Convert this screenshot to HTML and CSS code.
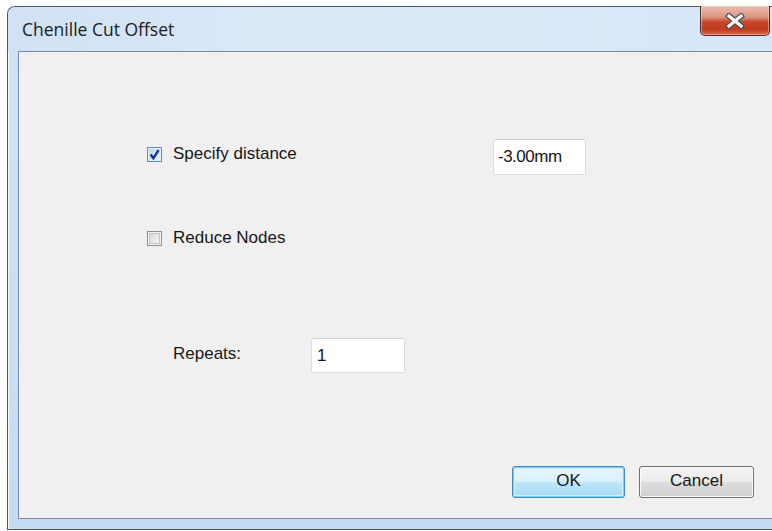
FILE: index.html
```html
<!DOCTYPE html>
<html lang="en">
<head>
<meta charset="utf-8">
<title>Chenille Cut Offset</title>
<link rel="stylesheet" href="styles.css">
</head>
<body>
<div class="window">
  <div class="titlebar">
    <span class="title">Chenille Cut Offset</span>
    <button class="close" aria-label="Close">
      <svg width="22" height="16" viewBox="0 0 22 16">
        <path d="M5 3 L17 13 M17 3 L5 13" stroke="#4a4a4a" stroke-width="5.6" stroke-linecap="square"/>
        <path d="M5 3 L17 13 M17 3 L5 13" stroke="#ffffff" stroke-width="3.2" stroke-linecap="square"/>
      </svg>
    </button>
  </div>
  <div class="client">
    <div class="row row-distance">
      <label class="check-label">
        <span class="checkbox checked">
          <svg width="11" height="11" viewBox="0 0 11 11"><path d="M1.6 5.6 L4.4 9.2 L9.6 1.2" fill="none" stroke="#1f2f86" stroke-width="2.4"/></svg>
        </span>
        <span>Specify distance</span>
      </label>
      <div class="field field-distance">-3.00mm</div>
    </div>
    <div class="row row-nodes">
      <label class="check-label">
        <span class="checkbox"></span>
        <span>Reduce Nodes</span>
      </label>
    </div>
    <div class="row row-repeats">
      <span class="repeats-label">Repeats:</span>
      <div class="field field-repeats">1</div>
    </div>
    <div class="row row-buttons">
      <button class="btn btn-default">OK</button>
      <button class="btn">Cancel</button>
    </div>
  </div>
</div>
</body>
</html>
```
FILE: styles.css
```css
html, body {
  margin: 0;
  padding: 0;
  background: #ffffff;
  overflow: hidden;
  height: 531px;
}

.window {
  margin: 6px 0 0 7px;
  height: 522px;
  border: 1px solid #4d5966;
  border-right: none;
  border-radius: 8px 0 0 0;
  background: linear-gradient(180deg, #dbe8f6 0%, #cfe2f5 8%, #c6dcf2 100%);
  display: flex;
  flex-direction: column;
  box-shadow: inset 1px 1px 0 #f4f9fe;
}

.titlebar {
  height: 44px;
  flex: none;
  display: flex;
  align-items: flex-start;
  justify-content: space-between;
  background: linear-gradient(90deg, #cfe1f4 0%, #dceaf8 40%, #d5e6f6 100%);
  border-radius: 7px 0 0 0;
}

.title {
  font-family: "Open Sans", "Noto Sans", sans-serif;
  font-size: 17.5px;
  color: #1b1b1b;
  margin: 10px 0 0 14px;
}

.close {
  width: 70px;
  height: 30px;
  margin: -1px 2px 0 0;
  padding: 0;
  border: 1px solid #5c2a24;
  border-top: none;
  border-radius: 0 0 5px 5px;
  background: linear-gradient(180deg, #e9bcae 0%, #dc9682 38%, #c8452c 55%, #c23a22 80%, #d6664c 100%);
  box-shadow: inset 0 0 0 1px rgba(255, 220, 210, 0.45);
  display: flex;
  align-items: center;
  justify-content: center;
}

.client {
  margin-left: 10px;
  flex: 1;
  margin-bottom: 10px;
  background: #f0f0f0;
  border: 1px solid #7d8c9b;
  border-right: none;
  display: flex;
  flex-direction: column;
  padding-top: 87px;
  font-family: "Liberation Sans", Arial, sans-serif;
  font-size: 17px;
  color: #161616;
}

.row {
  display: flex;
  align-items: center;
}

.row-distance {
  padding-left: 128px;
  height: 36px;
}

.row-distance .check-label {
  width: 346px;
  margin-bottom: 6px;
}

.row-nodes {
  padding-left: 128px;
  height: 20px;
  margin-top: 53px;
}

.row-repeats {
  padding-left: 154px;
  margin-top: 90px;
  height: 35px;
}

.repeats-label {
  width: 138px;
  margin-bottom: 4px;
}

.row-buttons {
  margin-top: 93px;
  padding-left: 493px;
  gap: 14px;
}

.check-label {
  display: flex;
  align-items: center;
  gap: 11px;
}

.checkbox {
  width: 13px;
  height: 13px;
  border: 1px solid #8e8f8f;
  background: linear-gradient(135deg, #d2d2d2 0%, #e6e6e6 50%, #fafafa 100%);
  box-shadow: inset 0 0 0 1px #f4f4f4, inset 0 0 0 2px #c4c4c4;
  display: flex;
  align-items: center;
  justify-content: center;
  flex: none;
}

.checkbox.checked {
  border-color: #5a8cc2;
  background: linear-gradient(135deg, #b4d3f1 0%, #d3e7f9 55%, #eef6fd 100%);
  box-shadow: inset 0 0 0 1px #e6f1fb;
}

.field {
  box-sizing: border-box;
  background: #ffffff;
  border: 1px solid #d9dde3;
  border-top-color: #cfd3d9;
  border-radius: 2px;
  display: flex;
  align-items: center;
  padding-left: 4px;
}

.field-distance {
  width: 93px;
  height: 36px;
  letter-spacing: -0.5px;
}

.field-repeats {
  width: 94px;
  height: 35px;
  padding-left: 5px;
}

.btn {
  box-sizing: border-box;
  width: 115px;
  height: 32px;
  border: 1px solid #707070;
  border-radius: 3px;
  background: linear-gradient(180deg, #f2f2f2 0%, #ebebeb 48%, #dddddd 52%, #cfcfcf 100%);
  box-shadow: inset 0 0 0 1px #fbfbfb;
  font-family: "Liberation Sans", Arial, sans-serif;
  font-size: 17px;
  color: #161616;
  padding: 0 0 2px;
}

.btn-default {
  width: 113px;
  border-color: #3c8ccb;
  background: linear-gradient(180deg, #eaf6fd 0%, #d9f0fc 48%, #bee6fd 52%, #a7d9f5 100%);
  box-shadow: inset 0 0 0 1px #86cdf3, inset 0 0 0 2px #d4eefc;
}
```
